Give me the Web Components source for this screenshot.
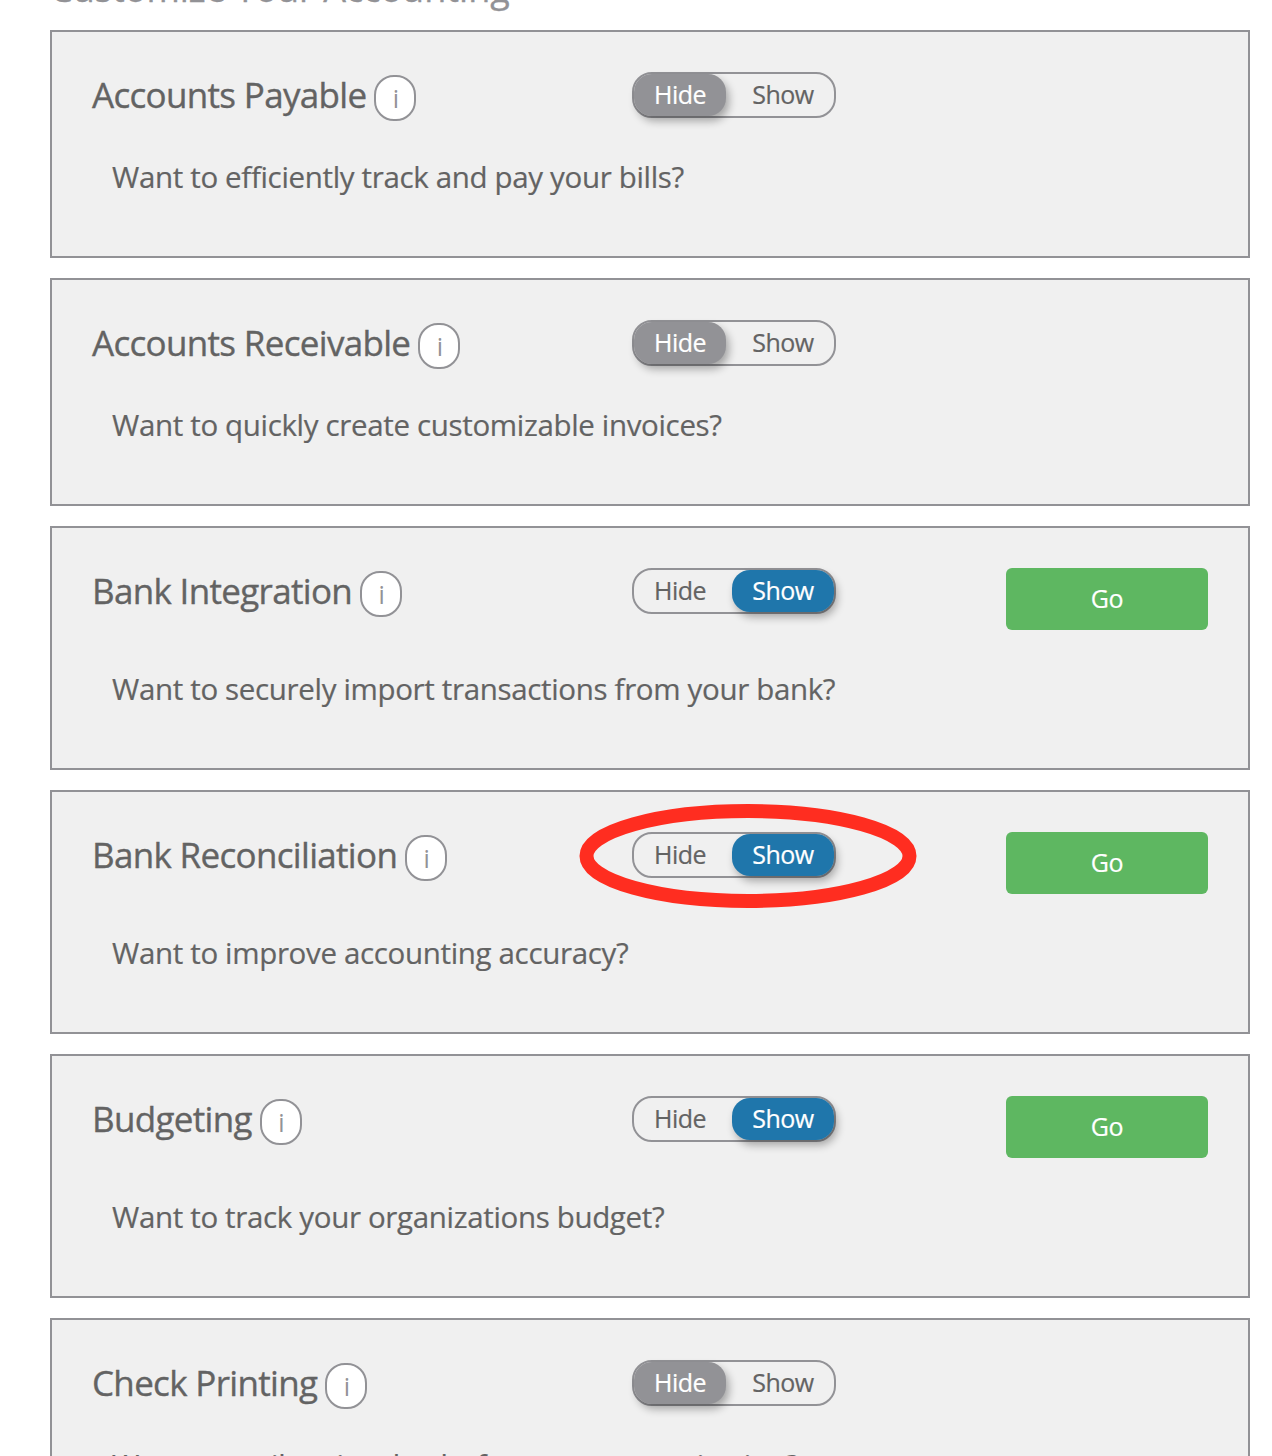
<!DOCTYPE html>
<html>
<head>
<meta charset="utf-8">
<title>Customize Your Accounting</title>
<style>
    html, body { margin: 0; background: #fff; }
    body { height: 1456px; overflow: hidden; font-family: "Open Sans", sans-serif; color: #636363; }
</style>
</head>
<body>
<settings-page>
    <feature-card name="Accounts Payable" state="hide" text="Want to efficiently track and pay your bills?"></feature-card>
    <feature-card name="Accounts Receivable" state="hide" text="Want to quickly create customizable invoices?"></feature-card>
    <feature-card name="Bank Integration" state="show" text="Want to securely import transactions from your bank?"></feature-card>
    <feature-card name="Bank Reconciliation" state="show" circled text="Want to improve accounting accuracy?"></feature-card>
    <feature-card name="Budgeting" state="show" text="Want to track your organizations budget?"></feature-card>
    <feature-card name="Check Printing" state="hide" text="Want to easily print checks from your organization?"></feature-card>
</settings-page>

<script>
class SettingsPage extends HTMLElement {
    constructor() {
        super();
        this.attachShadow({ mode: 'open' });
        this.shadowRoot.innerHTML = `
            <style>
                :host {
                    display: flex;
                    flex-direction: column;
                    gap: 20px;
                    padding: 0 22px 0 50px;
                }
                h1 {
                    margin: -39px 0 -7px;
                    height: 56px;
                    line-height: 56px;
                    font-size: 36px;
                    font-weight: 400;
                    letter-spacing: 0;
                    color: #929296;
                    -webkit-text-stroke: 0.3px #929296;
                }
            </style>
            <h1>Customize Your Accounting</h1>
            <slot></slot>
        `;
    }
}

class ToggleSwitch extends HTMLElement {
    constructor() {
        super();
        this.attachShadow({ mode: 'open' });
    }

    connectedCallback() {
        const state = this.getAttribute('state') || 'hide';
        this.shadowRoot.innerHTML = `
            <style>
                :host {
                    display: flex;
                    justify-content: space-between;
                    box-sizing: border-box;
                    width: 204px;
                    height: 46px;
                    border: 2px solid #929296;
                    border-radius: 20px;
                    font-size: 25px;
                    letter-spacing: -0.55px;
                }
                span {
                    display: flex;
                    align-items: center;
                    justify-content: center;
                    padding-bottom: 2px;
                    box-sizing: border-box;
                    border-radius: 18px;
                    color: #636363;
                    -webkit-text-stroke: 0.2px currentColor;
                }
                .hide { flex: 0 0 92px; }
                .show { flex: 0 0 102px; }
                .on {
                    color: #fff;
                    box-shadow: 3px 5px 8px rgba(0, 0, 0, 0.32);
                }
                .hide.on { background: #929296; }
                .show.on { background: #1f76ab; }
            </style>
            <span class="hide ${state === 'hide' ? 'on' : ''}">Hide</span>
            <span class="show ${state === 'show' ? 'on' : ''}">Show</span>
        `;
    }
}

class InfoBadge extends HTMLElement {
    constructor() {
        super();
        this.attachShadow({ mode: 'open' });
        this.shadowRoot.innerHTML = `
            <style>
                :host {
                    display: inline-flex;
                    align-items: center;
                    justify-content: center;
                    box-sizing: border-box;
                    width: 42px;
                    height: 46px;
                    margin-top: 2px;
                    padding-left: 1px;
                    background: #fff;
                    border: 2px solid #929296;
                    border-radius: 20px;
                    font-size: 25px;
                    color: #929296;
                }
            </style>
            i
        `;
    }
}

class FeatureCard extends HTMLElement {
    constructor() {
        super();
        this.attachShadow({ mode: 'open' });
    }

    connectedCallback() {
        const state = this.getAttribute('state');
        const hasGo = state === 'show';
        this.shadowRoot.innerHTML = `
            <style>
                :host {
                    display: block;
                    position: relative;
                    box-sizing: border-box;
                    height: ${hasGo ? 244 : 228}px;
                    background: #f0f0f0;
                    border: 2px solid #929296;
                }
                .top {
                    display: flex;
                    align-items: flex-start;
                    padding: 40px 40px 0;
                    height: ${hasGo ? 62 : 46}px;
                }
                .title {
                    flex: 0 0 540px;
                    display: flex;
                    gap: 8px;
                    margin-top: 1px;
                }
                h2 {
                    margin: 0;
                    font-size: 35px;
                    line-height: 44px;
                    font-weight: 400;
                    letter-spacing: -0.68px;
                    color: #636363;
                    white-space: nowrap;
                    -webkit-text-stroke: 0.35px #636363;
                }
                button {
                    width: 202px;
                    height: 62px;
                    margin-left: auto;
                    padding: 0 0 2px;
                    border: 0;
                    border-radius: 6px;
                    background: #5eb761;
                    color: #fff;
                    font: 25px "Open Sans", sans-serif;
                    letter-spacing: -0.4px;
                    -webkit-text-stroke: 0.2px #fff;
                }
                p {
                    margin: 35px 0 0 60px;
                    font-size: 29.5px;
                    line-height: 48px;
                    letter-spacing: -0.34px;
                    color: #636363;
                    white-space: nowrap;
                    -webkit-text-stroke: 0.2px #636363;
                }
                svg {
                    position: absolute;
                    left: 527px;
                    top: 12px;
                }
            </style>
            <div class="top">
                <div class="title"><h2>${this.getAttribute('name')}</h2><info-badge></info-badge></div>
                <toggle-switch state="${state}"></toggle-switch>
                ${hasGo ? '<button>Go</button>' : ''}
            </div>
            <p>${this.getAttribute('text')}</p>
            ${this.hasAttribute('circled') ? `
            <svg width="338" height="104" viewBox="0 0 338 104">
                <ellipse cx="169" cy="52" rx="161.5" ry="45" fill="none" stroke="#ff2d20" stroke-width="14"></ellipse>
            </svg>` : ''}
        `;
    }
}

customElements.define('settings-page', SettingsPage);
customElements.define('toggle-switch', ToggleSwitch);
customElements.define('info-badge', InfoBadge);
customElements.define('feature-card', FeatureCard);
</script>
</body>
</html>
